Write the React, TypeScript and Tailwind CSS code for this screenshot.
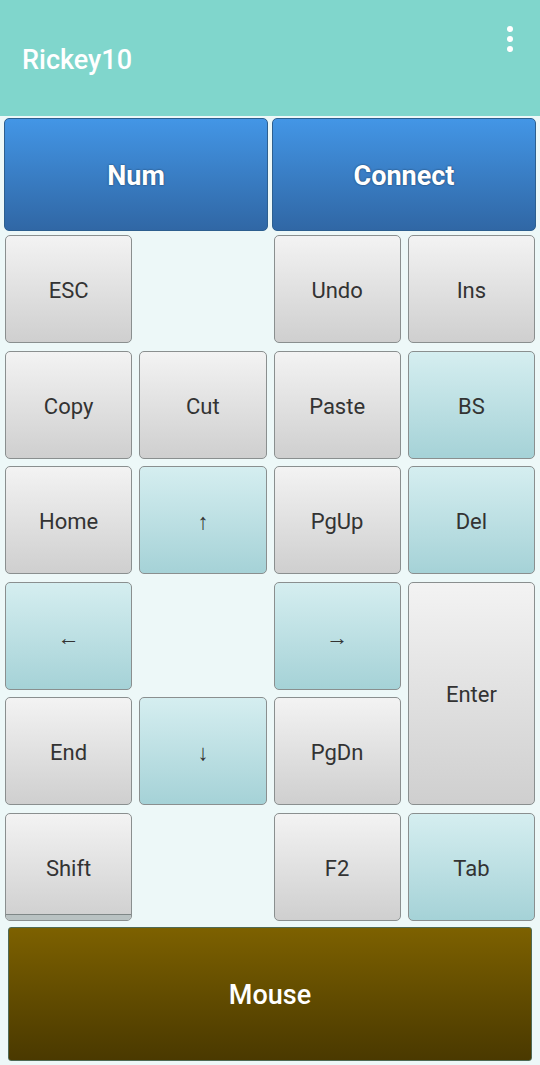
import React from 'react';

type KeyDef = { label: string; teal?: boolean; cls?: string; shift?: boolean };

const Key: React.FC<{ k: KeyDef }> = ({ k }) => (
  <div
    className={`relative overflow-hidden rounded-[5px] border border-[#8a8f8f] flex items-center justify-center pt-[3px] text-[#333] ${
      k.teal
        ? 'bg-gradient-to-b from-[#d5eef0] to-[#a5d2d7]'
        : 'bg-gradient-to-b from-[#f3f3f3] to-[#cfcfcf]'
    } ${k.cls || ''}`}
  >
    <span className="text-[22px]">{k.label}</span>
    {k.shift && (
      <div className="absolute left-0 right-0 bottom-0 h-[6px] bg-[#b9c2c2] border-t border-[#7f8787]" />
    )}
  </div>
);

const Blank = () => <div />;

export default function App() {
  return (
    <div className="w-[540px] h-[1065px] bg-[#edf8f8] flex flex-col" style={{ fontFamily: 'Roboto, "Liberation Sans", sans-serif' }}>
      {/* toolbar */}
      <div className="h-[116px] bg-[#80d6cc] flex items-start justify-between shrink-0">
        <div className="text-white text-[27px] font-medium pl-[22px] pt-[40px]">Rickey10</div>
        <div className="flex flex-col gap-[4px] pt-[26px] pr-[27px]">
          <span className="w-[6px] h-[6px] rounded-full bg-white" />
          <span className="w-[6px] h-[6px] rounded-full bg-white" />
          <span className="w-[6px] h-[6px] rounded-full bg-white" />
        </div>
      </div>

      {/* top buttons */}
      <div className="flex gap-[4px] px-[4px] pt-[2px]">
        {['Num', 'Connect'].map((t) => (
          <div
            key={t}
            className="flex-1 h-[113px] rounded-[5px] border border-[#2d5f8f] bg-gradient-to-b from-[#4396e6] to-[#3067a5] flex items-center justify-center pt-[4px]"
          >
            <span className="text-white text-[27px] font-bold [text-shadow:0_0_2px_rgba(0,0,0,0.6)]">{t}</span>
          </div>
        ))}
      </div>

      {/* key grid */}
      <div className="grid grid-cols-4 grid-rows-[repeat(6,108px)] gap-x-[7px] gap-y-[7.5px] pl-[5px] pr-[5px] pt-[4px]">
        <Key k={{ label: 'ESC' }} />
        <Blank />
        <Key k={{ label: 'Undo' }} />
        <Key k={{ label: 'Ins' }} />

        <Key k={{ label: 'Copy' }} />
        <Key k={{ label: 'Cut' }} />
        <Key k={{ label: 'Paste' }} />
        <Key k={{ label: 'BS', teal: true }} />

        <Key k={{ label: 'Home' }} />
        <Key k={{ label: '↑', teal: true }} />
        <Key k={{ label: 'PgUp' }} />
        <Key k={{ label: 'Del', teal: true }} />

        <Key k={{ label: '←', teal: true }} />
        <Blank />
        <Key k={{ label: '→', teal: true }} />
        <Key k={{ label: 'Enter', cls: 'row-span-2' }} />

        <Key k={{ label: 'End' }} />
        <Key k={{ label: '↓', teal: true }} />
        <Key k={{ label: 'PgDn' }} />

        <Key k={{ label: 'Shift', shift: true }} />
        <Blank />
        <Key k={{ label: 'F2' }} />
        <Key k={{ label: 'Tab', teal: true }} />
      </div>

      {/* mouse */}
      <div className="px-[8px] pt-[6px]">
        <div className="h-[134px] rounded-[3px] border border-[#4f6a55] bg-gradient-to-b from-[#7d6100] to-[#4a3900] flex items-center justify-center pt-[4px]">
          <span className="text-white text-[27px] font-medium">Mouse</span>
        </div>
      </div>
    </div>
  );
}
